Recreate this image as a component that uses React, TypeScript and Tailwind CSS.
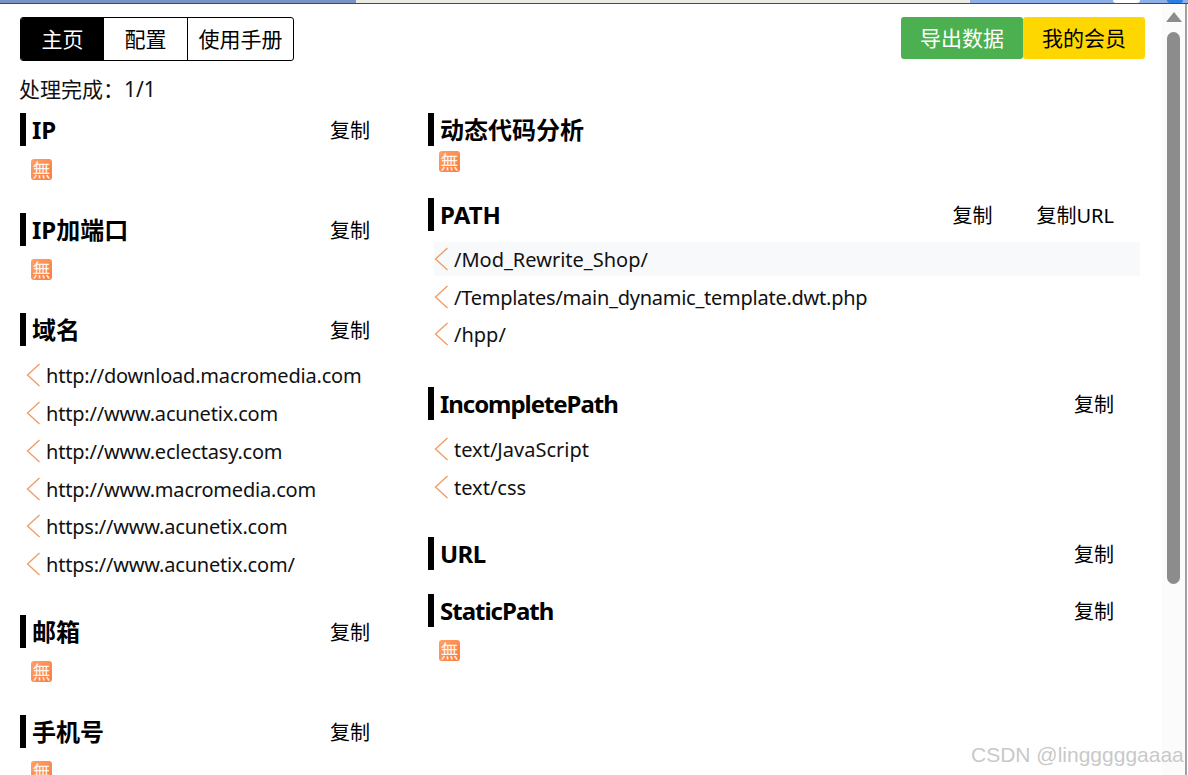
const font = '[font-family:"Noto_Sans","Noto_Sans_CJK_SC",sans-serif]';

const Chevron = () => (
  <svg width="14" height="24" viewBox="0 0 14 24" fill="none" className="shrink-0">
    <path d="M13.5 1 L1.5 12 L13.5 23" stroke="#ee9a63" strokeWidth="1.3" />
  </svg>
);

// the orange "no result" emoji
const EmptyIcon = () => (
  <span className="flex h-[21px] w-[21px] items-center justify-center overflow-hidden rounded-[3px] bg-gradient-to-br from-[#ffa066] to-[#fb7a3e] text-[18px] leading-none text-[#fff3ea]">
    無
  </span>
);

interface HeadingProps {
  title: string;
  actions?: string[];
  titleClass?: string;
}

const Heading: React.FC<HeadingProps> = ({ title, actions = [], titleClass = '' }) => (
  <div className="flex h-[33px] items-center border-l-[6px] border-black pl-1.5 pr-[26px]">
    <h2 className={`flex-1 text-[24px] font-bold leading-none text-black ${titleClass}`}>{title}</h2>
    <div className="flex gap-[44px] pt-[3px] text-[20px] leading-none text-black">
      {actions.map((a) => (
        <span key={a}>{a}</span>
      ))}
    </div>
  </div>
);

interface RowProps {
  text: string;
  active?: boolean;
  textClass?: string;
}

const Row: React.FC<RowProps> = ({ text, active, textClass = '' }) => (
  <div className={`ml-1.5 flex h-[33.75px] items-center gap-1.5 text-[20px] leading-none text-[#111] ${active ? 'bg-[#f8f9fb]' : ''}`}>
    <Chevron />
    <span className={`pt-[2px] ${textClass}`}>{text}</span>
  </div>
);

const domains = [
  'http://download.macromedia.com',
  'http://www.acunetix.com',
  'http://www.eclectasy.com',
  'http://www.macromedia.com',
  'https://www.acunetix.com',
  'https://www.acunetix.com/',
];

export default function App() {
  return (
    <div className={`relative h-[775px] w-[1188px] overflow-hidden bg-white ${font}`}>
      <div className="flex h-1 border-b border-[#3d4a5e] bg-[#7a94c2]">
        <div className="ml-[356px] w-[614px] bg-[#ecebe3]" />
        <div className="flex-1 bg-[#8fb0e6] pl-[143px]">
          <div className="flex h-full">
            <div className="w-[27px] rounded-b-full bg-white" />
            <div className="ml-[27px] w-4 rounded-b-full bg-[#2a7de1]" />
          </div>
        </div>
      </div>

      <div className="flex h-[771px]">
        <div className="w-[1162px] shrink-0 pl-5 pr-[22px] pt-[13px]">
          <div className="flex items-start justify-between">
            <div className="flex h-11 overflow-hidden rounded-[3px] border border-black text-[21px]">
              <button className="w-[83px] bg-black pt-[2px] text-white">主页</button>
              <button className="w-[84px] border-r border-black pt-[2px] text-black">配置</button>
              <button className="w-[105px] pt-[2px] text-black">使用手册</button>
            </div>
            <div className="mr-[-5px] flex h-[42px] text-[21px]">
              <button className="w-[122px] rounded-[3px] bg-[#4caf50] pt-[1px] text-white">导出数据</button>
              <button className="w-[122px] rounded-[3px] bg-[#ffd700] pt-[1px] text-black">我的会员</button>
            </div>
          </div>

          <div className="-ml-px mt-[14px] h-[28px] whitespace-nowrap text-[21px] leading-[28px] text-[#111]">
            处理完成：1/1
          </div>

          <div className="mt-[10px] flex gap-8">
            <div className="w-[376px] shrink-0">
              <Heading title="IP" actions={['复制']} />
              <div className="ml-[11px] mt-[13px]"><EmptyIcon /></div>
              <div className="mt-[33px]"><Heading title="IP加端口" actions={['复制']} /></div>
              <div className="ml-[11px] mt-[13px]"><EmptyIcon /></div>
              <div className="mt-[33px]"><Heading title="域名" actions={['复制']} /></div>
              <div className="mt-[12.5px] flex flex-col gap-1">
                {domains.map((d) => (
                  <Row key={d} text={d} textClass="tracking-[-0.2px]" />
                ))}
              </div>
              <div className="mt-[34px]"><Heading title="邮箱" actions={['复制']} /></div>
              <div className="ml-[11px] mt-[13px]"><EmptyIcon /></div>
              <div className="mt-[33px]"><Heading title="手机号" actions={['复制']} /></div>
              <div className="ml-[11px] mt-[13px]"><EmptyIcon /></div>
            </div>

            <div className="w-[712px] shrink-0">
              <Heading title="动态代码分析" />
              <div className="ml-[11px] mt-[5px]"><EmptyIcon /></div>
              <div className="mt-[26px]"><Heading title="PATH" actions={['复制', '复制URL']} /></div>
              <div className="mt-[11px] flex flex-col gap-1">
                <Row text="/Mod_Rewrite_Shop/" active />
                <Row text="/Templates/main_dynamic_template.dwt.php" textClass="tracking-[-0.25px]" />
                <Row text="/hpp/" />
              </div>
              <div className="mt-[35.75px]">
                <Heading title="IncompletePath" actions={['复制']} titleClass="tracking-[-1.05px]" />
              </div>
              <div className="mt-[12px] flex flex-col gap-1">
                <Row text="text/JavaScript" />
                <Row text="text/css" />
              </div>
              <div className="mt-[33.5px]">
                <Heading title="URL" actions={['复制']} titleClass="tracking-[-0.6px]" />
              </div>
              <div className="mt-6">
                <Heading title="StaticPath" actions={['复制']} titleClass="tracking-[-1px]" />
              </div>
              <div className="ml-[11px] mt-[13px]"><EmptyIcon /></div>
            </div>
          </div>
        </div>

        <div className="relative w-[23px] shrink-0 bg-[#fbfbfb]">
          <svg width="16" height="10" viewBox="0 0 16 10" className="ml-1 mt-2 block">
            <path d="M8 0 L16 10 H0 Z" fill="#8c8c8c" />
          </svg>
          <div className="ml-[5px] mt-2.5 h-[552px] w-[13px] rounded-full bg-[#8c8c8c]" />
        </div>
        <div className="w-0.5 shrink-0 bg-[#a0a0a0]" />
      </div>

      <span className="absolute left-[971px] top-[743px] whitespace-nowrap text-[21px] leading-6 text-[#c9c9c9] [font-family:'Liberation_Sans',sans-serif]">
        CSDN @lingggggaaaa
      </span>
    </div>
  );
}
